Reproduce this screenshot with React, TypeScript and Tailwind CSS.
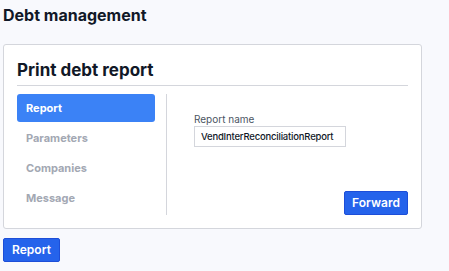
import React, { useState } from 'react';

const tabs = ['Report', 'Parameters', 'Companies', 'Message'];

const App: React.FC = () => {
  const [active, setActive] = useState<string>('Report');

  return (
    <div
      className="min-h-screen bg-[#f8f9fd] px-[3px] pt-[3px] text-[#111827]"
      style={{ fontFamily: 'Inter, "Noto Sans", sans-serif' }}
    >
      <h1 className="text-[16px] leading-[24px] font-bold">Debt management</h1>

      <div className="mt-[17px] w-[419px] bg-white border border-[#d4d6dc] rounded-[3px] p-[13px]">
        <h2 className="text-[17px] leading-[24px] font-bold pb-[3px] border-b border-[#d4d6dc]">
          Print debt report
        </h2>

        <div className="flex mt-[8px] h-[121px]">
          <div className="w-[138px] flex flex-col gap-[2px]">
            {tabs.map(tab => (
              <button
                key={tab}
                onClick={() => setActive(tab)}
                className={`h-[28px] px-[9px] text-left text-[11px] font-bold rounded-[3px] ${
                  active === tab ? 'bg-[#3b82f6] text-white' : 'text-[#a3a8b3]'
                }`}
              >
                {tab}
              </button>
            ))}
          </div>

          <div className="ml-[11px] border-l border-[#d4d6dc] flex-1 flex flex-col pl-[27px] pt-[19px]">
            <label className="text-[10px] leading-[12px] text-[#4b5563]">Report name</label>
            <input
              readOnly
              value="VendInterReconciliationReport"
              className="mt-[1px] w-[152px] h-[21px] border border-[#d4d6dc] px-[6px] text-[9.5px] font-medium tracking-[-0.2px] text-[#111827] outline-none"
            />
            <div className="mt-auto flex justify-end">
              <button className="w-[64px] h-[24px] bg-[#2563eb] border border-[#1d4ed8] rounded-[2px] text-white text-[12px] font-semibold">
                Forward
              </button>
            </div>
          </div>
        </div>
      </div>

      <button className="mt-[9px] w-[57px] h-[24px] bg-[#2563eb] border border-[#1d4ed8] rounded-[2px] text-white text-[12px] font-semibold">
        Report
      </button>
    </div>
  );
};

export default App;
